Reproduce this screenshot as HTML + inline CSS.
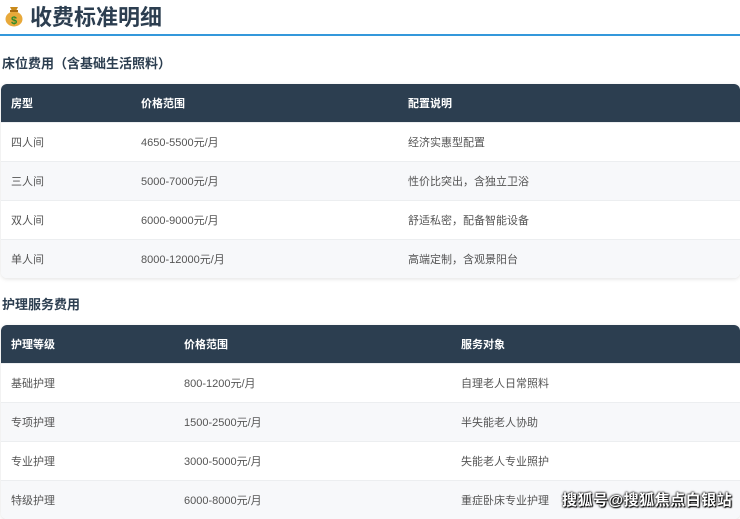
<!DOCTYPE html>
<html><head><meta charset="utf-8"><style>
*{margin:0;padding:0;box-sizing:border-box}
body{width:740px;height:518px;overflow:hidden;background:#fff;font-family:"Liberation Sans","Noto Sans CJK SC",sans-serif;color:#2c3e50;position:relative}
h1{position:absolute;left:4px;top:2px;font-size:22px;font-weight:bold;color:#2c3e50;display:flex;align-items:center;gap:6px;height:28px}
.line{position:absolute;left:0;top:34px;width:740px;height:2px;background:#3498db}
h2{position:absolute;left:2px;font-size:13px;font-weight:bold;color:#2c3e50}
table{position:absolute;left:1px;width:739px;border-collapse:collapse;font-size:11px;border-radius:6px;overflow:hidden;box-shadow:0 1px 4px rgba(0,0,0,.12)}
th{background:#2c3e50;color:#fff;font-weight:bold;text-align:left;height:38px;padding:0 0 0 10px}
td{height:39px;padding:0 0 0 10px;color:#555;border-top:1px solid #eceef0;background:#fff}
tr:nth-child(odd) td{background:#f7f8fa}
.wm{position:absolute;left:562px;top:489px;font-size:15px;color:#fff;font-weight:bold;text-shadow:0 0 2px #000,0 0 2px #000,1px 1px 1px #000;letter-spacing:.5px}
</style></head><body>
<h1><svg width="20" height="22" viewBox="0 0 20 22"><path d="M6 2h8l-2 4h-4z" fill="#c98a1b"/><ellipse cx="10" cy="14" rx="8.5" ry="7.5" fill="#e8a93a"/><rect x="6" y="5" width="8" height="2" fill="#a86b12"/><text x="10" y="19" font-size="11" font-weight="bold" text-anchor="middle" fill="#2a8a2a" font-family="Liberation Sans">$</text></svg>收费标准明细</h1>
<div class="line"></div>
<h2 style="top:53px">床位费用（含基础生活照料）</h2>
<table style="top:84px">
<colgroup><col style="width:130px"><col style="width:267px"><col></colgroup>
<tr><th>房型</th><th>价格范围</th><th>配置说明</th></tr>
<tr><td>四人间</td><td>4650-5500元/月</td><td>经济实惠型配置</td></tr>
<tr><td>三人间</td><td>5000-7000元/月</td><td>性价比突出，含独立卫浴</td></tr>
<tr><td>双人间</td><td>6000-9000元/月</td><td>舒适私密，配备智能设备</td></tr>
<tr><td>单人间</td><td>8000-12000元/月</td><td>高端定制，含观景阳台</td></tr>
</table>
<h2 style="top:294px">护理服务费用</h2>
<table style="top:325px">
<colgroup><col style="width:173px"><col style="width:277px"><col></colgroup>
<tr><th>护理等级</th><th>价格范围</th><th>服务对象</th></tr>
<tr><td>基础护理</td><td>800-1200元/月</td><td>自理老人日常照料</td></tr>
<tr><td>专项护理</td><td>1500-2500元/月</td><td>半失能老人协助</td></tr>
<tr><td>专业护理</td><td>3000-5000元/月</td><td>失能老人专业照护</td></tr>
<tr><td>特级护理</td><td>6000-8000元/月</td><td>重症卧床专业护理</td></tr>
</table>
<div class="wm">搜狐号@搜狐焦点白银站</div>
</body></html>
